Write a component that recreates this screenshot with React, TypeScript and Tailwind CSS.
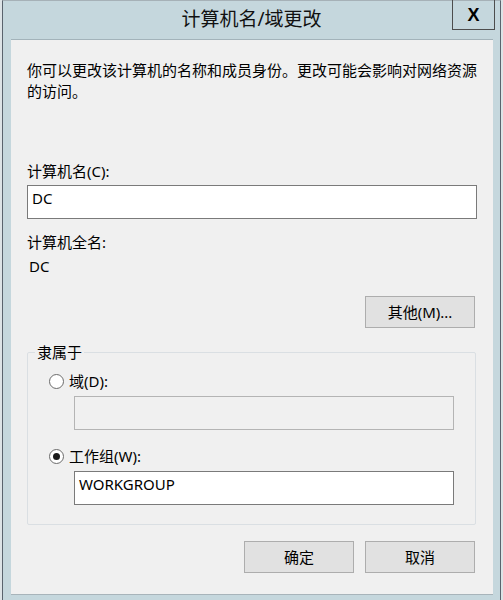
const ui = { fontFamily: '"Noto Sans", "Noto Sans CJK SC", sans-serif' };

function TextBox({ value, disabled = false }: { value?: string; disabled?: boolean }) {
  return (
    <div
      className={
        'h-[34px] px-[4px] pt-[2px] text-[15px] leading-[21px] text-black border ' +
        (disabled ? 'bg-[#f0f0f0] border-[#b4b4b4]' : 'bg-white border-[#7a7a7a]')
      }
    >
      {value}
    </div>
  );
}

function Radio({ checked, label }: { checked: boolean; label: string }) {
  return (
    <div className="flex items-center h-[21px] ml-[21px]">
      <span className="w-[15px] h-[15px] rounded-full border border-[#6b6b6b] bg-white flex items-center justify-center">
        {checked && <span className="w-[7px] h-[7px] rounded-full bg-[#1a1a1a]" />}
      </span>
      <span className="ml-[5px] text-[15px] leading-[21px]">{label}</span>
    </div>
  );
}

function Button({ children }: { children: React.ReactNode }) {
  return (
    <div className="w-[110px] h-[32px] bg-[#e1e1e1] border border-[#adadad] flex items-center justify-center text-[15px] text-black">
      {children}
    </div>
  );
}

export default function App() {
  return (
    <div className="w-[503px] h-[600px] bg-[#dde3e6] pl-[2px]" style={ui}>
      <div className="h-full flex">
        <div className="w-[499px] h-full bg-[#c5d7dd] border-l border-t border-r border-l-[#5a636d] border-t-[#a6b1b7] border-r-[#5a636d] flex flex-col">
          {/* title bar */}
          <div className="relative h-[38px] flex items-center justify-center">
            <span className="text-[19px] text-[#111] pb-[1px]">计算机名/域更改</span>
            <div className="absolute top-[-1px] right-[5px] w-[43px] h-[30px] border border-t-0 border-[#4d4d4d] flex items-center justify-center">
              <span className="text-[18px] font-bold leading-none" style={{ fontFamily: '"Liberation Sans", Arial, sans-serif' }}>
                X
              </span>
            </div>
          </div>

          {/* dialog body */}
          <div className="ml-[8px] w-[482px] h-[555px] bg-[#f0f0f0] border-t border-[#a3b3ba] shadow-[0_1px_0_#a8b4ba] px-[16px] pt-[20px] text-black">
            <p className="w-[458px] text-[15px] leading-[21px]">
              你可以更改该计算机的名称和成员身份。更改可能会影响对网络资源的访问。
            </p>

            <div className="mt-[59px] text-[15px] leading-[21px]">计算机名(C):</div>
            <div className="mt-[3px] w-[450px]">
              <TextBox value="DC" />
            </div>

            <div className="mt-[13px] text-[15px] leading-[21px]">计算机全名:</div>
            <div className="mt-[3px] ml-[2px] text-[15px] leading-[21px]">DC</div>

            <div className="mt-[19px] w-[448px] flex justify-end">
              <Button>其他(M)...</Button>
            </div>

            <fieldset className="mt-[14px] w-[449px] border border-[#dadfe3] rounded-[2px] pb-[19px]">
              <legend className="ml-[7px] px-[2px] text-[15px] leading-[21px]">隶属于</legend>
              <div className="mt-[8px]">
                <Radio checked={false} label="域(D):" />
              </div>
              <div className="mt-[4px] ml-[46px] w-[380px]">
                <TextBox disabled />
              </div>
              <div className="mt-[16px]">
                <Radio checked label="工作组(W):" />
              </div>
              <div className="mt-[4px] ml-[46px] w-[380px]">
                <TextBox value="WORKGROUP" />
              </div>
            </fieldset>

            <div className="mt-[16px] w-[448px] flex justify-end gap-[11px]">
              <Button>确定</Button>
              <Button>取消</Button>
            </div>
          </div>
        </div>
      </div>
    </div>
  );
}
